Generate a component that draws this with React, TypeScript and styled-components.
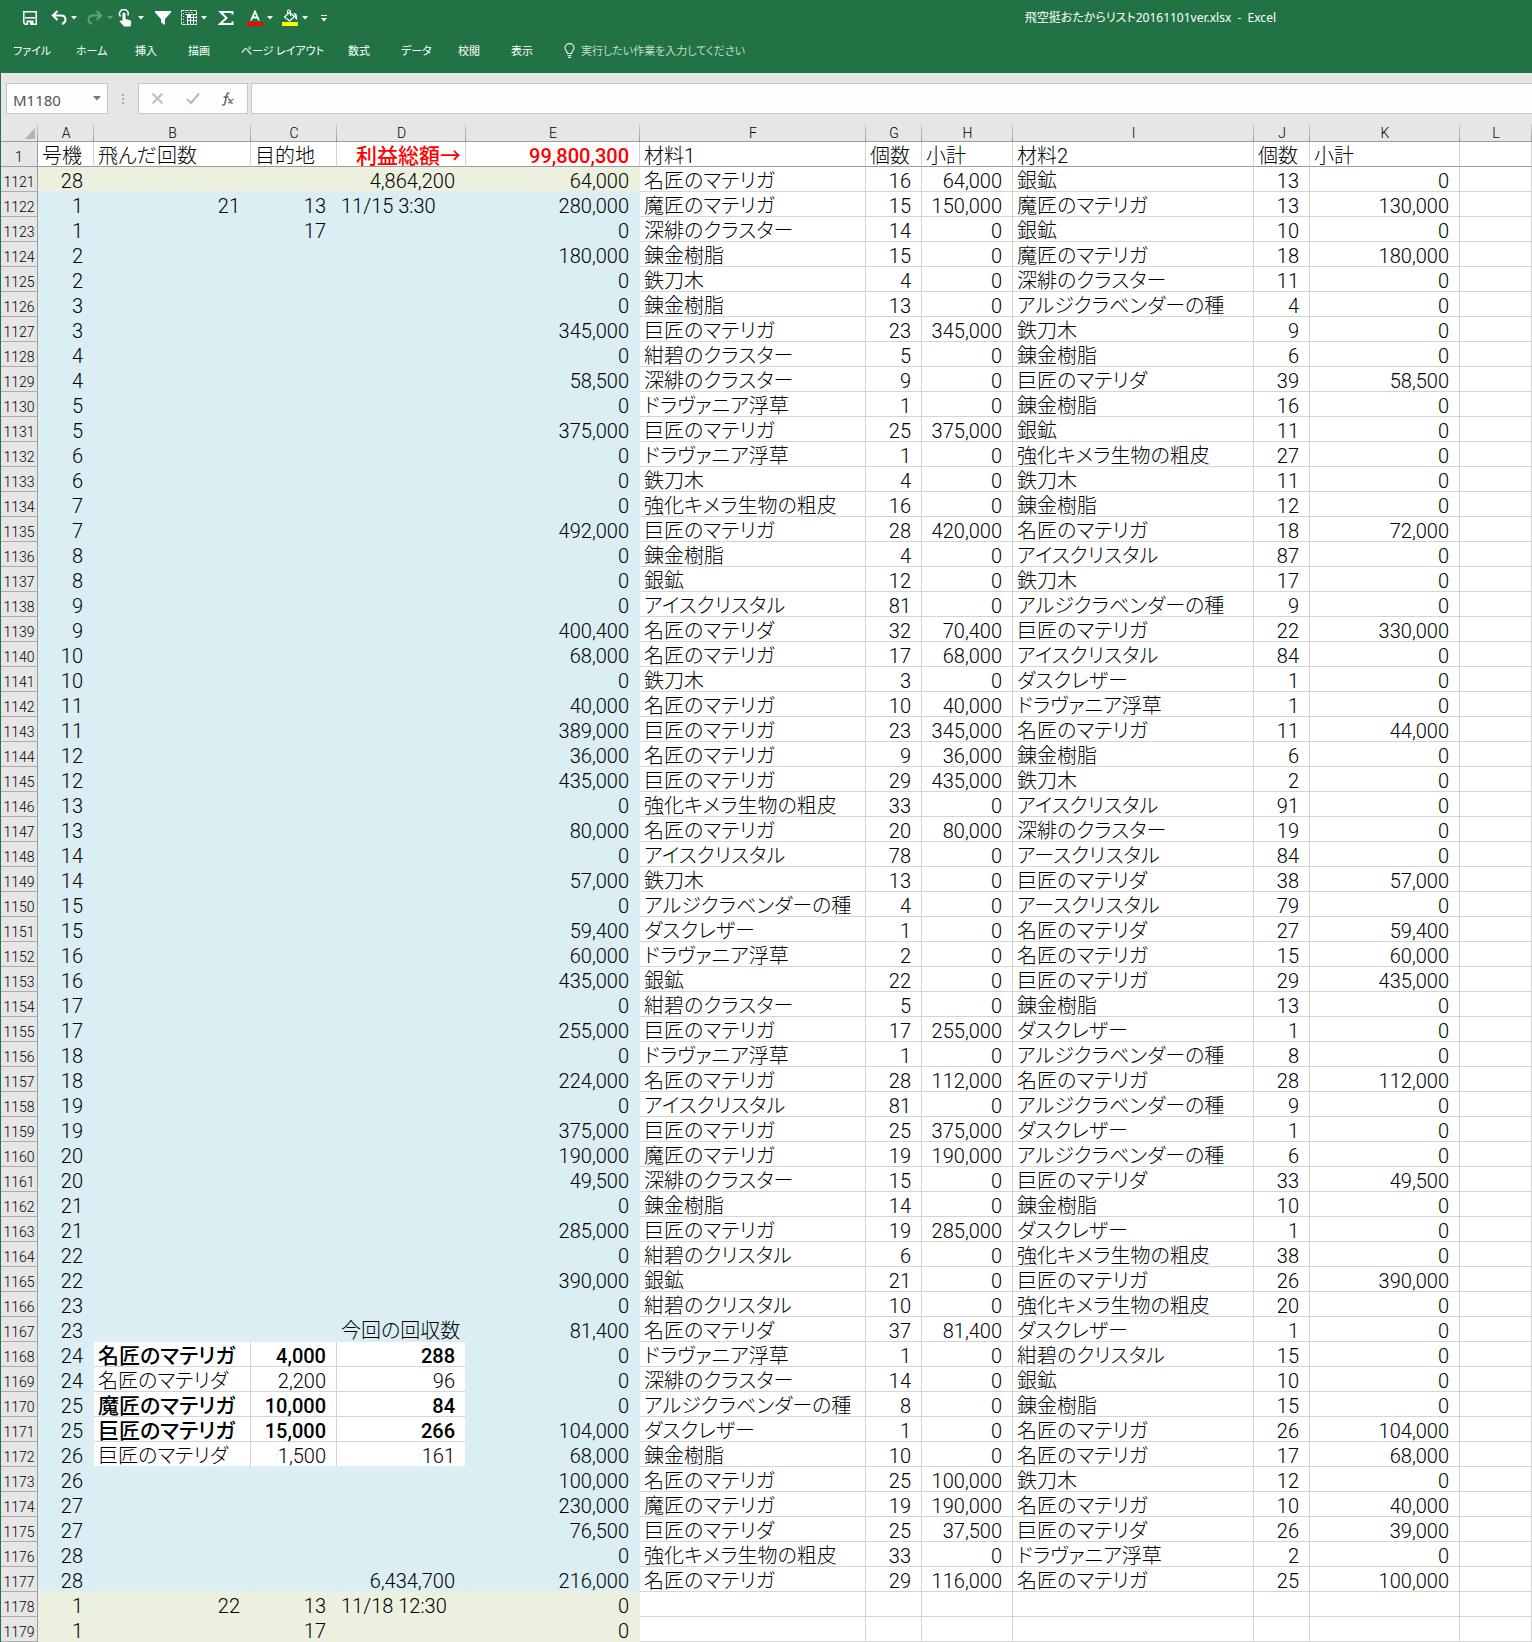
import React from "react";
import styled, { createGlobalStyle, css } from "styled-components";

const GREEN = "#217346";
const CHROME = "#e6e6e6";
const LINE = "#d4d4d4";
const EDGE = "#9b9b9b";
const BLUE = "#daeef3";
const OLIVE = "#ebf1de";

const GlobalStyle = createGlobalStyle`
  *, *::before, *::after { box-sizing: border-box; }
  body {
    margin: 0;
    background: #fff;
    font-family: "Noto Sans CJK JP", "Liberation Sans", sans-serif;
    font-feature-settings: "palt";
  }
  button, input { font: inherit; font-feature-settings: inherit; }
`;

const Window = styled.div`
  border-left: 1px solid ${GREEN};
  background: ${CHROME};
`;

const Ribbon = styled.header`
  height: 73px;
  background: ${GREEN};
  color: #fff;
  display: flex;
  flex-direction: column;
`;

const TitleBar = styled.div`
  height: 34px;
  display: flex;
  align-items: center;
  justify-content: space-between;
  padding: 1px 256px 0 21px;
`;

const QuickAccess = styled.div`
  display: grid;
  grid-template-columns: 29px 36px 31px 37px 26px 37px 29px 35px 39px 8px;
`;

const Tool = styled.button<{ $dim?: boolean }>`
  display: flex;
  align-items: center;
  gap: 4px;
  padding: 0;
  border: 0;
  background: none;
  color: #fff;
  opacity: ${(p) => (p.$dim ? 0.3 : 1)};
  svg { display: block; flex: none; }
`;

const Title = styled.h1`
  margin: 0;
  font-family: "Noto Sans", "Noto Sans CJK JP", sans-serif;
  font-size: 12px;
  line-height: 16px;
  font-weight: 400;
  white-space: pre;
`;

const Tabs = styled.nav`
  height: 32px;
  display: grid;
  grid-template-columns: 63px 59px 53px 53px 107px 53px 57px 53px 53px auto;
  align-items: center;
  padding-left: 12px;
`;

const Tab = styled.button`
  padding: 0;
  border: 0;
  background: none;
  color: #fff;
  text-align: left;
  font-size: 11px;
  line-height: 16px;
  white-space: nowrap;
`;

const TellMe = styled.label`
  display: flex;
  align-items: center;
  gap: 6px;
`;

const TellMeInput = styled.input`
  width: 240px;
  padding: 0;
  border: 0;
  outline: 0;
  background: none;
  color: #fff;
  font-size: 11px;
  line-height: 16px;
  &::placeholder { color: #c4dccf; opacity: 1; }
`;

const FormulaBar = styled.div`
  display: flex;
  padding: 10px 0 10px 5px;
`;

const field = css`
  height: 31px;
  border: 1px solid #c6c6c6;
  background: #fdfdfd;
`;

const NameBox = styled.div`
  ${field}
  width: 102px;
  display: flex;
  align-items: center;
  padding: 0 6px;
`;

const NameInput = styled.input`
  flex: 1;
  min-width: 0;
  padding: 2px 0 0;
  border: 0;
  outline: 0;
  background: none;
  color: #555;
  font-family: "Noto Sans", sans-serif;
  font-size: 15px;
  line-height: 20px;
`;

const IconButton = styled.button`
  display: flex;
  padding: 0;
  border: 0;
  background: none;
`;

const Grip = styled.div`
  width: 30px;
  display: flex;
  flex-direction: column;
  align-items: center;
  justify-content: center;
  gap: 2px;
  i { width: 2px; height: 2px; background: #a8a8a8; }
`;

const EntryButtons = styled.div`
  ${field}
  width: 110px;
  display: flex;
  align-items: center;
  justify-content: space-between;
  padding: 0 12px;
`;

const FormulaInput = styled.input`
  ${field}
  flex: 1;
  min-width: 0;
  margin-left: 3px;
  padding: 0 8px;
  border-right: 0;
  outline: 0;
`;

const Sheet = styled.table`
  width: 100%;
  table-layout: fixed;
  border-collapse: separate;
  border-spacing: 0;
  background: #fff;
  color: #000;
  font-family: Roboto, "Noto Sans CJK JP", sans-serif;
  font-weight: 300;
`;

const ColumnHead = styled.th`
  height: 18px;
  padding: 2px 0 0;
  border-bottom: 1px solid ${EDGE};
  background: linear-gradient(#d0d0d0, ${EDGE}) right / 1px 100% no-repeat ${CHROME};
  font-size: 14px;
  line-height: 15px;
  font-weight: 300;
`;

const Corner = styled(ColumnHead)`
  svg { display: block; margin: 0 3px 0 auto; }
`;

const RowHead = styled.th<{ $frozen?: boolean }>`
  height: 25px;
  padding: 6px 0 0;
  border-right: 1px solid ${EDGE};
  border-bottom: 1px solid ${(p) => (p.$frozen ? EDGE : "#ababab")};
  background: ${CHROME};
  font-size: 14px;
  line-height: 18px;
  font-weight: 300;
`;

type CellProps = {
  $fill?: string;
  $right?: string;
  $bottom?: string;
  $number?: boolean;
  $bold?: boolean;
};

const Cell = styled.td<CellProps>`
  height: 25px;
  padding: ${(p) => (p.$number ? "4px 10px 0 0" : "4px 0 0 4px")};
  border-right: 1px solid ${(p) => p.$right ?? LINE};
  border-bottom: 1px solid ${(p) => p.$bottom ?? LINE};
  background: ${(p) => p.$fill ?? "#fff"};
  text-align: ${(p) => (p.$number ? "right" : "left")};
  font-size: ${(p) => (p.$bold && !p.$number ? 21 : 20)}px;
  line-height: 20px;
  font-weight: ${(p) => (p.$bold ? 500 : 300)};
  white-space: nowrap;
`;

const HeadCell = styled(Cell)<{ $total?: boolean }>`
  border-bottom-color: ${EDGE};
  ${(p) =>
    p.$total &&
    css`
      color: #f00;
      text-align: right;
      padding-right: ${p.$number ? 10 : 4}px;
    `}
`;

const COLUMNS: [string, number | undefined][] = [
  ["A", 56], ["B", 157], ["C", 86], ["D", 129], ["E", 174], ["F", 226],
  ["G", 56], ["H", 91], ["I", 241], ["J", 56], ["K", 150], ["L", undefined],
];

const HEADINGS = ["号機", "飛んだ回数", "目的地", "利益総額→", "99,800,300", "材料1", "個数", "小計", "材料2", "個数", "小計", ""];

// One line per row, starting at row 1121: A|B|C|D|E|F|G|H|I|J|K
const FIRST_ROW = 1121;
const DATA = `28|||4,864,200|64,000|名匠のマテリガ|16|64,000|銀鉱|13|0
1|21|13|11/15 3:30|280,000|魔匠のマテリガ|15|150,000|魔匠のマテリガ|13|130,000
1||17||0|深緋のクラスター|14|0|銀鉱|10|0
2||||180,000|錬金樹脂|15|0|魔匠のマテリガ|18|180,000
2||||0|鉄刀木|4|0|深緋のクラスター|11|0
3||||0|錬金樹脂|13|0|アルジクラベンダーの種|4|0
3||||345,000|巨匠のマテリガ|23|345,000|鉄刀木|9|0
4||||0|紺碧のクラスター|5|0|錬金樹脂|6|0
4||||58,500|深緋のクラスター|9|0|巨匠のマテリダ|39|58,500
5||||0|ドラヴァニア浮草|1|0|錬金樹脂|16|0
5||||375,000|巨匠のマテリガ|25|375,000|銀鉱|11|0
6||||0|ドラヴァニア浮草|1|0|強化キメラ生物の粗皮|27|0
6||||0|鉄刀木|4|0|鉄刀木|11|0
7||||0|強化キメラ生物の粗皮|16|0|錬金樹脂|12|0
7||||492,000|巨匠のマテリガ|28|420,000|名匠のマテリガ|18|72,000
8||||0|錬金樹脂|4|0|アイスクリスタル|87|0
8||||0|銀鉱|12|0|鉄刀木|17|0
9||||0|アイスクリスタル|81|0|アルジクラベンダーの種|9|0
9||||400,400|名匠のマテリダ|32|70,400|巨匠のマテリガ|22|330,000
10||||68,000|名匠のマテリガ|17|68,000|アイスクリスタル|84|0
10||||0|鉄刀木|3|0|ダスクレザー|1|0
11||||40,000|名匠のマテリガ|10|40,000|ドラヴァニア浮草|1|0
11||||389,000|巨匠のマテリガ|23|345,000|名匠のマテリガ|11|44,000
12||||36,000|名匠のマテリガ|9|36,000|錬金樹脂|6|0
12||||435,000|巨匠のマテリガ|29|435,000|鉄刀木|2|0
13||||0|強化キメラ生物の粗皮|33|0|アイスクリスタル|91|0
13||||80,000|名匠のマテリガ|20|80,000|深緋のクラスター|19|0
14||||0|アイスクリスタル|78|0|アースクリスタル|84|0
14||||57,000|鉄刀木|13|0|巨匠のマテリダ|38|57,000
15||||0|アルジクラベンダーの種|4|0|アースクリスタル|79|0
15||||59,400|ダスクレザー|1|0|名匠のマテリダ|27|59,400
16||||60,000|ドラヴァニア浮草|2|0|名匠のマテリガ|15|60,000
16||||435,000|銀鉱|22|0|巨匠のマテリガ|29|435,000
17||||0|紺碧のクラスター|5|0|錬金樹脂|13|0
17||||255,000|巨匠のマテリガ|17|255,000|ダスクレザー|1|0
18||||0|ドラヴァニア浮草|1|0|アルジクラベンダーの種|8|0
18||||224,000|名匠のマテリガ|28|112,000|名匠のマテリガ|28|112,000
19||||0|アイスクリスタル|81|0|アルジクラベンダーの種|9|0
19||||375,000|巨匠のマテリガ|25|375,000|ダスクレザー|1|0
20||||190,000|魔匠のマテリガ|19|190,000|アルジクラベンダーの種|6|0
20||||49,500|深緋のクラスター|15|0|巨匠のマテリダ|33|49,500
21||||0|錬金樹脂|14|0|錬金樹脂|10|0
21||||285,000|巨匠のマテリガ|19|285,000|ダスクレザー|1|0
22||||0|紺碧のクリスタル|6|0|強化キメラ生物の粗皮|38|0
22||||390,000|銀鉱|21|0|巨匠のマテリガ|26|390,000
23||||0|紺碧のクリスタル|10|0|強化キメラ生物の粗皮|20|0
23|||今回の回収数|81,400|名匠のマテリダ|37|81,400|ダスクレザー|1|0
24|名匠のマテリガ|4,000|288|0|ドラヴァニア浮草|1|0|紺碧のクリスタル|15|0
24|名匠のマテリダ|2,200|96|0|深緋のクラスター|14|0|銀鉱|10|0
25|魔匠のマテリガ|10,000|84|0|アルジクラベンダーの種|8|0|錬金樹脂|15|0
25|巨匠のマテリガ|15,000|266|104,000|ダスクレザー|1|0|名匠のマテリガ|26|104,000
26|巨匠のマテリダ|1,500|161|68,000|錬金樹脂|10|0|名匠のマテリガ|17|68,000
26||||100,000|名匠のマテリガ|25|100,000|鉄刀木|12|0
27||||230,000|魔匠のマテリガ|19|190,000|名匠のマテリガ|10|40,000
27||||76,500|巨匠のマテリダ|25|37,500|巨匠のマテリダ|26|39,000
28||||0|強化キメラ生物の粗皮|33|0|ドラヴァニア浮草|2|0
28|||6,434,700|216,000|名匠のマテリガ|29|116,000|名匠のマテリガ|25|100,000
1|22|13|11/18 12:30|0||||||
1||17||0||||||`
  .split("\n")
  .map((line) => [...line.split("|"), ""]);

const BOLD_ROWS = [1168, 1170, 1171];

function fillOf(row: number, col: number): string | undefined {
  if (col > 4) return undefined;
  if (row >= 1168 && row <= 1172 && col >= 1 && col <= 3) return undefined;
  return row >= 1122 && row <= 1177 ? BLUE : OLIVE;
}

function cellProps(row: number, col: number, value: string): CellProps {
  const fill = fillOf(row, col);
  return {
    $fill: fill,
    $right: fill ?? fillOf(row, col + 1),
    $bottom: fillOf(row + 1, col) ?? fill,
    $number: /^[\d,]+$/.test(value),
    $bold: BOLD_ROWS.includes(row) && col >= 1 && col <= 3,
  };
}

const Caret = () => (
  <svg width="6" height="4" viewBox="0 0 6 4"><path d="M0 0h6L3 3.5z" fill="currentColor" /></svg>
);

const SaveIcon = () => (
  <svg width="16" height="16" viewBox="0 0 16 16" fill="none" stroke="#fff" strokeWidth="1.5">
    <path d="M1.8 1.8h12.4v12.4H3.200l-1.400-1.400z" />
    <path d="M3 7.800h10" strokeWidth="1.500" />
    <path d="M4.500 10.500h7V15h-7z" fill="#fff" stroke="none" />
    <path d="M6.200 12.200h1.800V15H6.200z" fill={GREEN} stroke="none" />
  </svg>
);

const UndoIcon = ({ flip }: { flip?: boolean }) => (
  <svg width="16" height="16" viewBox="0 0 16 16" fill="none" stroke="#fff" strokeWidth="2">
    <g transform={flip ? "matrix(-1 0 0 1 16 0)" : undefined}>
      <path d="M6.500 1L1.800 5.500l4.700 4.500M2 5.500h8c5.500 0 6 6.500 1 8.500" />
    </g>
  </svg>
);

const TouchIcon = () => (
  <svg width="16" height="18" viewBox="0 0 16 18">
    <path d="M2.500 7.500A4.300 4.300 0 1 1 9.800 6.500" fill="none" stroke="#fff" strokeWidth="1.500" />
    <path d="M4.500 5a1.500 1.500 0 0 1 3 0v5l4.500 1.200c1 .3 1.300 1 1.200 2L12.500 17.500H6L1.500 12.200c.4-1 1.500-1.100 3-.2z" fill="#fff" />
  </svg>
);

const FilterIcon = () => (
  <svg width="16" height="16" viewBox="0 0 16 16"><path d="M0 1h16v1.500L10 9v6l-4-2.500V9L0 2.500z" fill="#fff" /></svg>
);

const GridIcon = () => (
  <svg width="16" height="16" viewBox="0 0 16 16" fill="none" stroke="#fff">
    <path d="M.5.5h15v14h-15z" strokeDasharray="3 1" />
    <path d="M4.500 4.500h11M6.500 7.500h9M6.500 10.500h9M6.500 4.500v10M9.500 4.500v10M12.500 4.500v10" />
    <path d="M2.500 3v10M4.500 2.500h9" strokeDasharray="1 2" />
    <path d="M6 4h4v4H6z" fill="#fff" stroke="none" />
  </svg>
);

const SumIcon = () => (
  <svg width="16" height="16" viewBox="0 0 16 16" fill="none" stroke="#fff" strokeWidth="2">
    <path d="M14.500 4.500V2H2.500L8.500 8l-6.500 6h12.500v-2.500" />
  </svg>
);

const FontColorIcon = () => (
  <svg width="16" height="16" viewBox="0 0 16 16">
    <path d="M4 10.500L8 1.500l4 9M5.500 7.500h5" fill="none" stroke="#fff" strokeWidth="1.800" />
    <path d="M0 12h16v4H0z" fill="#f00" />
  </svg>
);

const FillIcon = () => (
  <svg width="16" height="17" viewBox="0 0 16 17">
    <path d="M7.500 3.500L2.500 8l5 4 5-4.500zM5.500 6V2.500a1.500 1.500 0 0 1 3 0V7" fill="none" stroke="#fff" strokeWidth="1.200" />
    <path d="M11.500 4c3 0 4 2 3.500 7-2-1-2.500-3-2.500-5z" fill="#fff" />
    <path d="M0 13h16v4H0z" fill="#ff0" />
  </svg>
);

const MoreIcon = () => (
  <svg width="6" height="8" viewBox="0 0 6 8"><path d="M0 1h6v1H0zM0 4h6L3 7.500z" fill="#fff" /></svg>
);

const BulbIcon = () => (
  <svg width="11" height="15" viewBox="0 0 11 15" fill="none" stroke="#e4f0e9" strokeWidth="1.200">
    <path d="M3.500 10.500C3.500 8.500 1 7.500 1 5a4.500 4.300 0 0 1 9 0c0 2.500-2.500 3.500-2.500 5.500zM3.500 12.500h4M4 14.300h3" />
  </svg>
);

const TABS = ["ファイル", "ホーム", "挿入", "描画", "ページ レイアウト", "数式", "データ", "校閲", "表示"];

export default function App() {
  return (
    <Window>
      <GlobalStyle />
      <Ribbon>
        <TitleBar>
          <QuickAccess>
            <Tool aria-label="上書き保存"><SaveIcon /></Tool>
            <Tool aria-label="元に戻す"><UndoIcon /><Caret /></Tool>
            <Tool aria-label="やり直し" $dim><UndoIcon flip /><Caret /></Tool>
            <Tool aria-label="タッチ"><TouchIcon /><Caret /></Tool>
            <Tool aria-label="フィルター"><FilterIcon /></Tool>
            <Tool aria-label="罫線"><GridIcon /><Caret /></Tool>
            <Tool aria-label="合計"><SumIcon /></Tool>
            <Tool aria-label="フォントの色"><FontColorIcon /><Caret /></Tool>
            <Tool aria-label="塗りつぶしの色"><FillIcon /><Caret /></Tool>
            <Tool aria-label="カスタマイズ"><MoreIcon /></Tool>
          </QuickAccess>
          <Title>{"飛空挺おたからリスト20161101ver.xlsx  -  Excel"}</Title>
        </TitleBar>
        <Tabs>
          {TABS.map((name) => (
            <Tab key={name}>{name}</Tab>
          ))}
          <TellMe>
            <BulbIcon />
            <TellMeInput aria-label="操作アシスト" placeholder="実行したい作業を入力してください" />
          </TellMe>
        </Tabs>
      </Ribbon>
      <FormulaBar>
        <NameBox>
          <NameInput aria-label="名前ボックス" defaultValue="M1180" />
          <IconButton aria-label="名前の一覧">
            <svg width="8" height="5" viewBox="0 0 8 5"><path d="M0 0h8L4 4.500z" fill="#777" /></svg>
          </IconButton>
        </NameBox>
        <Grip><i /><i /><i /></Grip>
        <EntryButtons>
          <IconButton aria-label="キャンセル">
            <svg width="13" height="13" viewBox="0 0 13 13"><path d="M1.500 1.500l10 10M11.500 1.500l-10 10" stroke="#bcbcbc" strokeWidth="1.800" /></svg>
          </IconButton>
          <IconButton aria-label="入力">
            <svg width="14" height="13" viewBox="0 0 14 13"><path d="M1 7l4 4 8-9.500" fill="none" stroke="#bcbcbc" strokeWidth="2.200" /></svg>
          </IconButton>
          <IconButton aria-label="関数の挿入">
            <svg width="14" height="14" viewBox="0 0 14 14" fill="none" stroke="#666" strokeWidth="1.500">
              <path d="M8.500 1.300C6.500.3 5.800 2 5.300 4.500L4 11c-.3 1.800-1.300 2.300-3 1.600M2.500 5h5" />
              <path d="M7 7.500c1.500-.8 2 .2 2.300 1.700.3 1.600 1 2.600 2.700 1.600M12.800 7.300c-2-.5-3.300 3.900-5.800 3.700" strokeWidth="1.200" />
            </svg>
          </IconButton>
        </EntryButtons>
        <FormulaInput aria-label="数式バー" />
      </FormulaBar>
      <Sheet>
        <colgroup>
          <col width={37} />
          {COLUMNS.map(([name, width]) => (
            <col key={name} width={width} />
          ))}
        </colgroup>
        <thead>
          <tr>
            <Corner aria-label="すべて選択">
              <svg width="10" height="11" viewBox="0 0 10 11"><path d="M10 0v11H0z" fill="#b4b4b4" /></svg>
            </Corner>
            {COLUMNS.map(([name]) => (
              <ColumnHead key={name} scope="col">{name}</ColumnHead>
            ))}
          </tr>
        </thead>
        <tbody>
          <tr>
            <RowHead scope="row" $frozen>1</RowHead>
            {HEADINGS.map((text, col) => (
              <HeadCell key={col} $total={col === 3 || col === 4} $bold={col === 3 || col === 4} $number={col === 4}>
                {text}
              </HeadCell>
            ))}
          </tr>
          {DATA.map((cells, index) => {
            const row = FIRST_ROW + index;
            return (
              <tr key={row}>
                <RowHead scope="row">{row}</RowHead>
                {cells.map((value, col) => (
                  <Cell key={col} {...cellProps(row, col, value)}>{value}</Cell>
                ))}
              </tr>
            );
          })}
        </tbody>
      </Sheet>
    </Window>
  );
}
